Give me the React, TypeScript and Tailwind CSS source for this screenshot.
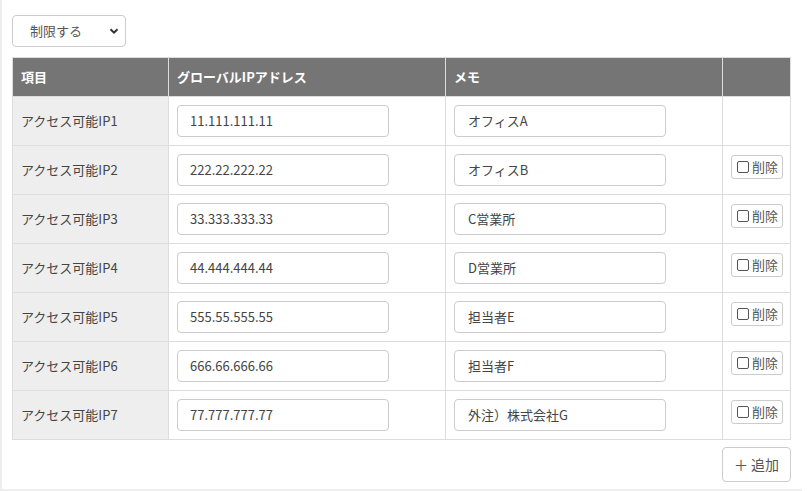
const rows = [
  { label: "アクセス可能IP1", ip: "11.111.111.11", memo: "オフィスA", del: false },
  { label: "アクセス可能IP2", ip: "222.22.222.22", memo: "オフィスB", del: true },
  { label: "アクセス可能IP3", ip: "33.333.333.33", memo: "C営業所", del: true },
  { label: "アクセス可能IP4", ip: "44.444.444.44", memo: "D営業所", del: true },
  { label: "アクセス可能IP5", ip: "555.55.555.55", memo: "担当者E", del: true },
  { label: "アクセス可能IP6", ip: "666.66.666.66", memo: "担当者F", del: true },
  { label: "アクセス可能IP7", ip: "77.777.777.77", memo: "外注）株式会社G", del: true },
];

const App = () => {
  return (
    <div className="w-[802px] h-[491px] bg-white border-l-2 border-b-2 border-[#eeeeee] text-[13px] text-[#333] font-['Noto_Sans_CJK_JP','Noto_Sans',sans-serif]">
      <div className="pl-[10px] pt-[15px]">
        <div className="w-[114px] h-[32px] border border-[#cccccc] rounded-[4px] flex items-center justify-between pl-[17px] pr-[6px] text-[#555]">
          <span className="text-[13px]">制限する</span>
          <svg width="10" height="10" viewBox="0 0 10 10">
            <path d="M1.5 3.2 L5 6.7 L8.5 3.2" fill="none" stroke="#333" strokeWidth="2" />
          </svg>
        </div>
      </div>
      <table className="mt-[10px] ml-[10px] w-[779px] border-collapse table-fixed">
        <thead>
          <tr className="h-[39px] bg-[#757575] text-white font-bold text-left">
            <th className="w-[156px] border border-[#dddddd] pl-[8px] font-bold">項目</th>
            <th className="w-[277px] border border-[#dddddd] pl-[8px] font-bold">グローバルIPアドレス</th>
            <th className="w-[277px] border border-[#dddddd] pl-[8px] font-bold">メモ</th>
            <th className="border border-[#dddddd]"></th>
          </tr>
        </thead>
        <tbody>
          {rows.map((r) => (
            <tr key={r.label} className="h-[49px]">
              <td className="bg-[#eeeeee] border border-[#dddddd] pl-[8px] text-[#444]">{r.label}</td>
              <td className="border border-[#dddddd] pl-[8px]">
                <div className="w-[212px] h-[32px] border border-[#cccccc] rounded-[4px] flex items-center pl-[12px] text-[#444]">
                  {r.ip}
                </div>
              </td>
              <td className="border border-[#dddddd] pl-[8px]">
                <div className="w-[212px] h-[32px] border border-[#cccccc] rounded-[4px] flex items-center pl-[13px] text-[#444]">
                  {r.memo}
                </div>
              </td>
              <td className="border border-[#dddddd] pl-[8px]">
                {r.del && (
                  <div className="w-[52px] h-[24px] mb-[6px] border border-[#cccccc] rounded-[3px] flex items-center pl-[5px] gap-[3px] text-[#555] text-[13px]">
                    <span className="w-[12px] h-[12px] border border-[#555] rounded-[2px]"></span>
                    <span>削除</span>
                  </div>
                )}
              </td>
            </tr>
          ))}
        </tbody>
      </table>
      <div className="w-[789px] flex justify-end mt-[7px]">
        <div className="w-[69px] h-[35px] border border-[#cccccc] rounded-[4px] flex items-center justify-center text-[14px] text-[#555]">
          ＋ 追加
        </div>
      </div>
    </div>
  );
};

export default App;
